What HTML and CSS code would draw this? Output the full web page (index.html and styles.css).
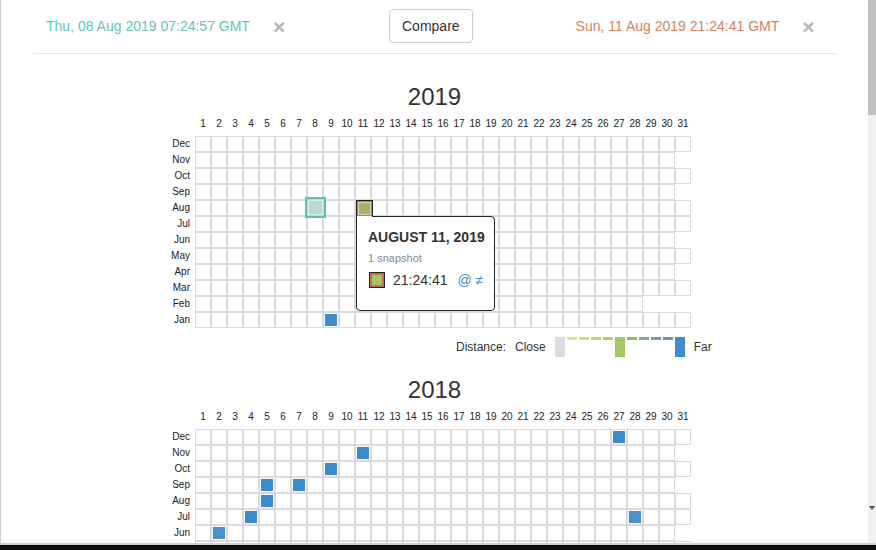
FILE: index.html
```html
<!DOCTYPE html>
<html>
<head>
<meta charset="utf-8">
<title>Snapshots</title>
<link rel="stylesheet" href="styles.css">
</head>
<body>
<div class="frame">
  <div class="page">
    <div class="container">
      <div class="hdr">
        <div class="hdr-left">
          <span class="date date-a">Thu, 08 Aug 2019 07:24:57 GMT</span>
          <span class="close">×</span>
        </div>
        <button class="btn">Compare</button>
        <div class="hdr-right">
          <span class="date date-b">Sun, 11 Aug 2019 21:24:41 GMT</span>
          <span class="close">×</span>
        </div>
      </div>
      <div id="years" class="years"></div>
    </div>
  </div>
  <div class="vscroll">
    <div class="vscroll-thumb"></div>
    <div class="vscroll-arrow"></div>
  </div>
</div>
<script src="script.js"></script>
</body>
</html>
```

FILE: styles.css
```css
html, body {
  margin: 0;
  height: 100%;
  overflow: hidden;
  background: #0a0a0a;
  font-family: "Liberation Sans", Arial, sans-serif;
  color: #333;
}

.frame {
  display: flex;
  height: 543px;
  border-left: 1px solid #d3d0cb;
  border-bottom: 2px solid #d3d0cb;
  background: #fff;
}

.page {
  flex: 1;
  min-width: 0;
  overflow: hidden;
}

.vscroll {
  width: 8px;
  background: #f1f1f1;
  display: flex;
  flex-direction: column;
  align-items: center;
}
.vscroll-thumb {
  width: 8px;
  height: 115px;
  background: #c1c1c1;
}
.vscroll-arrow {
  margin-top: auto;
  margin-bottom: 33px;
  width: 0;
  height: 0;
  border-top: 4px solid #505050;
  border-left: 3px solid transparent;
  border-right: 3px solid transparent;
}

.container {
  width: 803px;
  margin: 0 auto;
}

/* header */
.hdr {
  display: flex;
  align-items: center;
  padding: 9px 0 10px;
  border-bottom: 1px solid #e5e5e5;
}
.hdr-left {
  width: 356px;
  box-sizing: border-box;
  padding-left: 13px;
  display: flex;
  align-items: center;
}
.hdr-right {
  margin-left: 103px;
  display: flex;
  align-items: center;
}
.date {
  font-size: 14px;
  line-height: 20px;
}
.date-a { color: #62c5b9; }
.date-b { color: #d5825a; }
.close {
  margin-left: 23px;
  font-size: 21px;
  font-weight: bold;
  line-height: 1;
  color: #b4b4b4;
}
.btn {
  font-family: "Liberation Sans", Arial, sans-serif;
  font-size: 14px;
  line-height: 20px;
  padding: 6px 12px;
  border: 1px solid #ccc;
  border-radius: 4px;
  background: #fff;
  color: #333;
}

/* years */
.years {
  padding-top: 29px;
}
.year {
  margin-bottom: 19px;
}
.year-title {
  margin: 0;
  font-size: 24px;
  line-height: 28px;
  font-weight: normal;
  text-align: center;
  color: #333;
}
.cal {
  margin-left: 132px;
}
.days {
  display: flex;
  margin-top: 6px;
  padding-left: 30px;
  font-size: 10px;
  line-height: 14px;
  color: #222;
}
.days span {
  width: 16px;
  text-align: center;
}
.grid {
  margin-top: 5px;
  position: relative;
}
.row {
  display: flex;
  height: 16px;
}
.mlabel {
  width: 25px;
  margin-right: 5px;
  text-align: right;
  font-size: 10px;
  line-height: 16px;
  color: #222;
}
.cell {
  width: 16px;
  height: 16px;
  box-sizing: border-box;
  border: 1px solid #dadada;
  padding: 1px;
  position: relative;
}
.fill {
  display: block;
  width: 100%;
  height: 100%;
}
.far { background: #428bca; }
.far2 { background: #4a92c6; }
.mid { background: #a9b163; }

.sel {
  position: absolute;
  left: -3px;
  top: -4px;
  width: 21px;
  height: 21px;
  box-sizing: border-box;
  border: 2px solid #5dc1b2;
  background: #b9d9d5;
  z-index: 2;
}
.sel::after {
  content: "";
  position: absolute;
  left: 1px;
  top: 1px;
  right: 1px;
  bottom: 1px;
  border: 1px solid rgba(255, 255, 255, 0.55);
}

/* tooltip */
.tip {
  position: absolute;
  left: 191px;
  top: 80px;
  width: 139px;
  height: 95px;
  box-sizing: border-box;
  border: 1px solid #222;
  border-radius: 0 4px 4px 4px;
  background: #fff;
  padding: 12px 0 0 11px;
  z-index: 3;
}
.tip-tab {
  position: absolute;
  left: -1px;
  top: -17px;
  width: 15px;
  height: 16px;
  border: 1px solid #222;
  border-bottom: 0;
  background: #fff;
}
.tip-tab-sq {
  width: 15px;
  height: 15px;
  box-sizing: border-box;
  border: 1px solid #c4784f;
  background: #a9b163;
  box-shadow: inset 0 0 0 1px #e6cdb9;
}
.tip-title {
  font-size: 14px;
  line-height: 16px;
  font-weight: bold;
  color: #333;
}
.tip-count {
  margin-top: 7px;
  font-size: 11px;
  line-height: 13px;
  color: #888;
}
.tip-row {
  margin-top: 7px;
  display: flex;
  align-items: center;
  height: 16px;
  font-size: 14px;
}
.tip-sq {
  width: 16px;
  height: 16px;
  box-sizing: border-box;
  border: 1px solid #222;
  box-shadow: inset 0 0 0 2px #c0714d;
  background: #a3c862;
  margin-left: 1px;
  margin-right: 8px;
}
.tip-time { color: #333; }
.tip-links {
  margin-left: 10px;
  color: #428bca;
}

/* legend */
.legend {
  display: flex;
  align-items: center;
  height: 20px;
  margin-top: 9px;
  margin-left: 291px;
  font-size: 12px;
  color: #333;
}
.legend-label {
  margin-right: 9px;
}
.bars {
  display: flex;
  gap: 2px;
  align-self: flex-start;
  margin-right: 9px;
}
.bar {
  width: 10px;
  height: 3px;
}
.bar.tall {
  height: 20px;
}
```

FILE: script.js
```js
(function () {
  var MONTHS = ['Jan', 'Feb', 'Mar', 'Apr', 'May', 'Jun', 'Jul', 'Aug', 'Sep', 'Oct', 'Nov', 'Dec'];
  var DATA = {
    2019: { '1-9': 'far', '8-11': 'mid' },
    2018: { '12-27': 'far', '11-11': 'far', '10-9': 'far', '9-5': 'far', '9-7': 'far', '8-5': 'far', '7-4': 'far', '7-28': 'far2', '6-2': 'far2', '4-17': 'far', '2-12': 'far' }
  };
  var LEGEND = [
    ['#dcdcdc', true], ['#e9e272', false], ['#d9dd70', false], ['#c6d66b', false], ['#b5cf66', false],
    ['#a3c862', true], ['#8dbb6c', false], ['#79ae80', false], ['#68a496', false], ['#5d9cae', false],
    ['#428bca', true]
  ];

  function el(tag, cls) {
    var e = document.createElement(tag);
    if (cls) e.className = cls;
    return e;
  }

  var root = document.getElementById('years');
  for (var y = 2019; y >= 2018; y--) {
    var sec = el('section', 'year');
    var h = el('h2', 'year-title');
    h.textContent = y;
    sec.appendChild(h);

    var cal = el('div', 'cal');
    var days = el('div', 'days');
    for (var d = 1; d <= 31; d++) {
      var s = el('span');
      s.textContent = d;
      days.appendChild(s);
    }
    cal.appendChild(days);

    var grid = el('div', 'grid');
    var data = DATA[y] || {};
    for (var m = 12; m >= 1; m--) {
      var row = el('div', 'row');
      var lab = el('span', 'mlabel');
      lab.textContent = MONTHS[m - 1];
      row.appendChild(lab);
      var n = new Date(y, m, 0).getDate();
      for (var dd = 1; dd <= n; dd++) {
        var c = el('span', 'cell');
        var k = data[m + '-' + dd];
        if (k) c.appendChild(el('span', 'fill ' + k));
        if (y === 2019 && m === 8 && dd === 8) c.appendChild(el('span', 'sel'));
        row.appendChild(c);
      }
      grid.appendChild(row);
    }

    if (y === 2019) {
      var tip = el('div', 'tip');
      tip.innerHTML =
        '<div class="tip-tab"><div class="tip-tab-sq"></div></div>' +
        '<div class="tip-title">AUGUST 11, 2019</div>' +
        '<div class="tip-count">1 snapshot</div>' +
        '<div class="tip-row"><span class="tip-sq"></span><span class="tip-time">21:24:41</span>' +
        '<span class="tip-links">@ ≠</span></div>';
      grid.appendChild(tip);
    }
    cal.appendChild(grid);

    var legend = el('div', 'legend');
    var html = '<span class="legend-label">Distance:</span><span class="legend-label">Close</span><div class="bars">';
    for (var i = 0; i < LEGEND.length; i++) {
      html += '<span class="bar' + (LEGEND[i][1] ? ' tall' : '') + '" style="background:' + LEGEND[i][0] + '"></span>';
    }
    html += '</div><span>Far</span>';
    legend.innerHTML = html;
    cal.appendChild(legend);

    sec.appendChild(cal);
    root.appendChild(sec);
  }
})();
```
